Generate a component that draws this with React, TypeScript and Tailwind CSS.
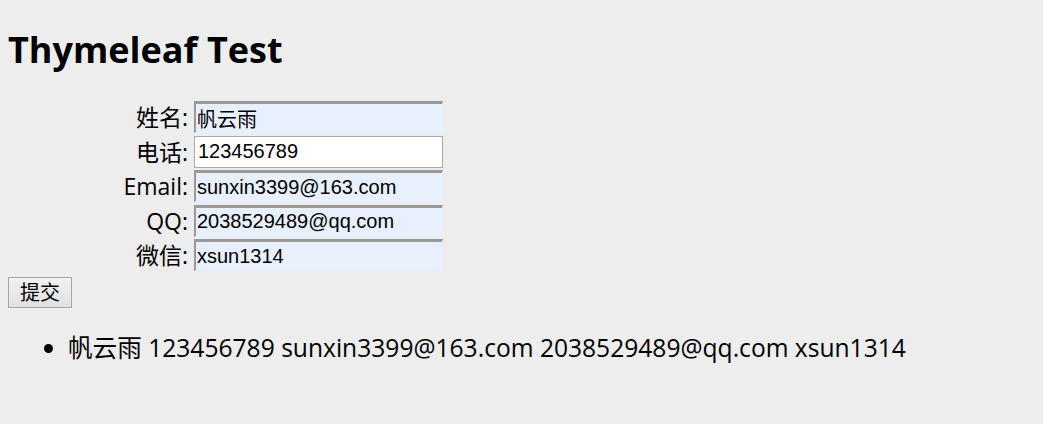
const person = {
  name: '帆云雨',
  phone: '123456789',
  email: 'sunxin3399@163.com',
  qq: '2038529489@qq.com',
  wechat: 'xsun1314',
}

const fields = [
  { label: '姓名:', value: person.name, filled: true },
  { label: '电话:', value: person.phone, filled: false },
  { label: 'Email:', value: person.email, filled: true },
  { label: 'QQ:', value: person.qq, filled: true },
  { label: '微信:', value: person.wechat, filled: true },
]

const sans = "font-['Open_Sans','Noto_Sans_CJK_SC',sans-serif]"

export default function App() {
  return (
    <div className={`min-h-screen bg-[#ededed] px-2 pt-[26px] text-black ${sans}`}>
      <h1 className="text-[36px] font-bold leading-[48px]">Thymeleaf Test</h1>

      <form className="mt-[27px]" onSubmit={(e) => e.preventDefault()}>
        <div className="grid grid-cols-[180px_249px] gap-x-[6px] gap-y-[2.5px]">
          {fields.map((f) => (
            <div key={f.label} className="contents">
              <label className="text-right text-[23px] leading-[32px]">{f.label}</label>
              <input
                readOnly
                value={f.value}
                className={
                  f.filled
                    ? "h-[32px] border-t-[3px] border-l-[2px] border-r border-b border-t-[#999] border-l-[#999] border-r-[#e8f0fe] border-b-[#e8f0fe] bg-[#e8f0fe] pl-[1px] font-['Liberation_Sans','Noto_Sans_CJK_SC',sans-serif] text-[20px] outline-none"
                    : "h-[32px] border border-[#a9a9a9] bg-white pl-[3px] font-['Liberation_Sans','Noto_Sans_CJK_SC',sans-serif] text-[20px] outline-none"
                }
              />
            </div>
          ))}
        </div>
        <button
          type="submit"
          className="mt-[6px] h-[31px] border border-[#a6a6a6] bg-gradient-to-b from-[#f2f2f2] to-[#e0e0e0] px-[11px] text-[20px] leading-none"
        >
          提交
        </button>
      </form>

      <ul className="mt-[25px] list-disc pl-[60px] text-[24.6px] leading-[30px]">
        <li>
          {person.name} {person.phone} {person.email} {person.qq} {person.wechat}
        </li>
      </ul>
    </div>
  )
}
